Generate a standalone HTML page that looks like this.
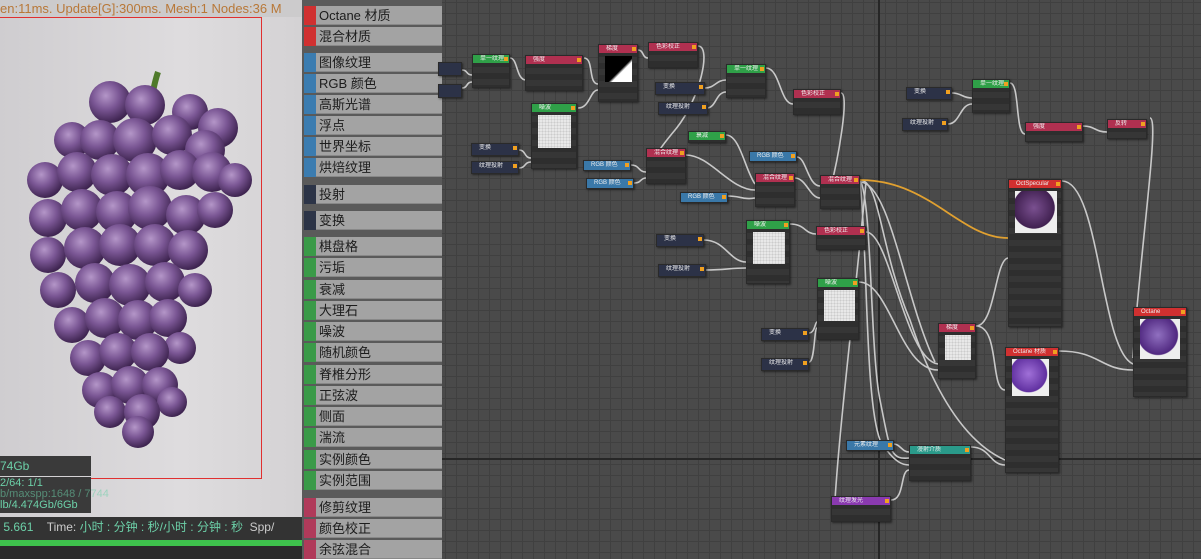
<!DOCTYPE html>
<html><head><meta charset="utf-8"><style>
*{margin:0;padding:0;box-sizing:border-box}
body{width:1201px;height:559px;overflow:hidden;background:#4a4a4a;font-family:"Liberation Sans","Noto Sans CJK SC",sans-serif;position:relative}
#vp{position:absolute;left:0;top:0;width:302px;height:559px;background:linear-gradient(90deg,#cfcdd0,#dedcde 60%,#d4d2d4);overflow:hidden}
#graph{position:absolute;left:442px;top:0;width:759px;height:559px;background-color:#4a4a4a;background-image:linear-gradient(#404040 1px,transparent 1px),linear-gradient(90deg,#404040 1px,transparent 1px);background-size:11px 11px;background-position:3px 2px}
#side{position:absolute;left:302px;top:0;width:141px;height:559px;background:#5a5a5a}
.it{position:absolute;left:2px;width:138px;height:19px;background:#a3a3a3;border-bottom:1px solid #888;font-size:13px;line-height:19px;color:#1c1c1c;padding-left:15px}
.it i{position:absolute;left:0;top:0;width:12px;height:19px}
.n{position:absolute;background:#363636;border:1px solid #2a2a2a;box-shadow:1px 1px 2px rgba(0,0,0,.5);background-image:repeating-linear-gradient(#363636 0 6px,#2e2e2e 6px 12px)}
.h{height:8px;font-size:6px;line-height:8px;color:#eee;padding-left:7px;white-space:nowrap;overflow:hidden;position:relative}
.h:after{content:"";position:absolute;right:1px;top:2px;width:4px;height:4px;background:#f0a020}
.img{position:absolute;left:6px;top:11px;background:#e8e8e8;background-image:radial-gradient(circle,#ccc 1px,transparent 1px);background-size:3px 3px}
.dk{background:#2c3247}.bl{background:#3a78a8}
</style></head><body>
<div id="vp">
<div style="position:absolute;left:0;top:0;width:302px;height:17px;background:#cccbcc;font-size:13px;color:#b87838;line-height:17px;white-space:nowrap">en:11ms. Update[G]:300ms. Mesh:1 Nodes:36 M</div>
<div style="position:absolute;left:-2px;top:17px;width:264px;height:462px;border:1px solid #e03030"></div>
<svg width="302" height="559" style="position:absolute;left:0;top:0">
<defs><radialGradient id="g" cx="40%" cy="35%" r="65%"><stop offset="0" stop-color="#b496c8"/><stop offset=".5" stop-color="#7a5694"/><stop offset="1" stop-color="#3e2450"/></radialGradient></defs>
<path d="M150 115 Q152 90 158 72" stroke="#4f7a2a" stroke-width="6" fill="none"/>
<g fill="url(#g)">
<circle cx="110" cy="102" r="21"/><circle cx="190" cy="112" r="18"/><circle cx="218" cy="128" r="20"/><circle cx="145" cy="105" r="20"/>
<circle cx="72" cy="140" r="18"/><circle cx="100" cy="140" r="20"/><circle cx="135" cy="140" r="22"/><circle cx="172" cy="135" r="20"/><circle cx="205" cy="150" r="20"/>
<circle cx="45" cy="180" r="18"/><circle cx="77" cy="172" r="20"/><circle cx="112" cy="175" r="21"/><circle cx="148" cy="175" r="22"/><circle cx="180" cy="170" r="20"/><circle cx="212" cy="172" r="20"/><circle cx="235" cy="180" r="17"/>
<circle cx="48" cy="218" r="19"/><circle cx="82" cy="210" r="21"/><circle cx="117" cy="212" r="21"/><circle cx="150" cy="208" r="22"/><circle cx="186" cy="215" r="20"/><circle cx="215" cy="210" r="18"/>
<circle cx="48" cy="255" r="18"/><circle cx="85" cy="248" r="21"/><circle cx="120" cy="245" r="21"/><circle cx="155" cy="245" r="21"/><circle cx="188" cy="250" r="20"/>
<circle cx="58" cy="290" r="18"/><circle cx="95" cy="283" r="20"/><circle cx="130" cy="285" r="21"/><circle cx="165" cy="282" r="20"/><circle cx="195" cy="290" r="17"/>
<circle cx="72" cy="325" r="18"/><circle cx="105" cy="318" r="20"/><circle cx="138" cy="320" r="20"/><circle cx="168" cy="318" r="19"/><circle cx="180" cy="348" r="16"/>
<circle cx="88" cy="358" r="18"/><circle cx="118" cy="352" r="19"/><circle cx="150" cy="352" r="19"/>
<circle cx="100" cy="390" r="18"/><circle cx="130" cy="385" r="19"/><circle cx="160" cy="385" r="18"/><circle cx="172" cy="402" r="15"/>
<circle cx="110" cy="412" r="16"/><circle cx="142" cy="412" r="18"/><circle cx="138" cy="432" r="16"/>
</g></svg>
<div style="position:absolute;left:0;top:456px;width:91px;height:20px;background:#3a3a3a;color:#6cd0a8;font-size:12px;line-height:20px">74Gb</div>
<div style="position:absolute;left:0;top:477px;width:91px;height:36px;background:#3a3a3a"></div>
<div style="position:absolute;left:0;top:478px;color:#6cd0a8;font-size:11px;line-height:11px;white-space:nowrap">2/64: 1/1<br><span style="opacity:.55">b/maxspp:1648 / 7744</span><br>lb/4.474Gb/6Gb</div>
<div style="position:absolute;left:0;top:517px;width:302px;height:21px;background:#333;color:#6cd0a8;font-size:12px;line-height:21px;white-space:nowrap;overflow:hidden">&nbsp;5.661 &nbsp;&nbsp;&nbsp;<span style="color:#ccc">Time:</span> 小时 : 分钟 : 秒/小时 : 分钟 : 秒 &nbsp;<span style="color:#ccc">Spp/</span></div>
<div style="position:absolute;left:0;top:538px;width:302px;height:3px;background:#333"></div>
<div style="position:absolute;left:0;top:540px;width:302px;height:6px;background:#3ec24c"></div>
<div style="position:absolute;left:0;top:546px;width:302px;height:13px;background:#2b2b2b"></div>
</div>
<div id="side">
<div class="it" style="top:6px"><i style="background:#d03030"></i>Octane 材质</div>
<div class="it" style="top:27px"><i style="background:#d03030"></i>混合材质</div>
<div class="it" style="top:53px"><i style="background:#3b7cb0"></i>图像纹理</div>
<div class="it" style="top:74px"><i style="background:#3b7cb0"></i>RGB 颜色</div>
<div class="it" style="top:95px"><i style="background:#3b7cb0"></i>高斯光谱</div>
<div class="it" style="top:116px"><i style="background:#3b7cb0"></i>浮点</div>
<div class="it" style="top:137px"><i style="background:#3b7cb0"></i>世界坐标</div>
<div class="it" style="top:158px"><i style="background:#3b7cb0"></i>烘焙纹理</div>
<div class="it" style="top:185px"><i style="background:#2c3447"></i>投射</div>
<div class="it" style="top:211px"><i style="background:#2c3447"></i>变换</div>
<div class="it" style="top:237px"><i style="background:#3a9a48"></i>棋盘格</div>
<div class="it" style="top:258px"><i style="background:#3a9a48"></i>污垢</div>
<div class="it" style="top:280px"><i style="background:#3a9a48"></i>衰减</div>
<div class="it" style="top:301px"><i style="background:#3a9a48"></i>大理石</div>
<div class="it" style="top:322px"><i style="background:#3a9a48"></i>噪波</div>
<div class="it" style="top:343px"><i style="background:#3a9a48"></i>随机颜色</div>
<div class="it" style="top:365px"><i style="background:#3a9a48"></i>脊椎分形</div>
<div class="it" style="top:386px"><i style="background:#3a9a48"></i>正弦波</div>
<div class="it" style="top:407px"><i style="background:#3a9a48"></i>侧面</div>
<div class="it" style="top:428px"><i style="background:#3a9a48"></i>湍流</div>
<div class="it" style="top:450px"><i style="background:#3a9a48"></i>实例颜色</div>
<div class="it" style="top:471px"><i style="background:#3a9a48"></i>实例范围</div>
<div class="it" style="top:498px"><i style="background:#b03a5a"></i>修剪纹理</div>
<div class="it" style="top:519px"><i style="background:#b03a5a"></i>颜色校正</div>
<div class="it" style="top:540px"><i style="background:#b03a5a"></i>余弦混合</div>
</div>
<div id="graph">
<div style="position:absolute;left:436px;top:0;width:2px;height:559px;background:#262626"></div>
<div style="position:absolute;left:0;top:458px;width:759px;height:2px;background:#262626"></div>
</div>
<svg width="1201" height="559" style="position:absolute;left:0;top:0" fill="none" stroke="#c8c8c8" stroke-width="1.6">
<path d="M462 70 C468 70 466 75 472 75"/><path d="M462 88 C468 88 466 82 472 82"/>
<path d="M510 58 C518 58 516 80 526 80"/>
<path d="M578 108 C590 108 590 90 598 90"/>
<path d="M584 58 C594 58 588 84 598 84"/>
<path d="M638 50 C644 50 642 58 648 58"/>
<path d="M698 46 C712 46 700 100 675 130 C650 160 655 160 648 170"/>
<path d="M519 150 C526 150 524 158 531 158"/><path d="M519 168 C526 168 524 162 531 162"/>
<path d="M631 165 C640 165 638 172 646 172"/><path d="M634 183 C642 183 640 178 646 178"/>
<path d="M705 88 C715 88 716 80 726 80"/><path d="M707 108 C716 108 716 92 726 92"/>
<path d="M766 68 C780 68 780 104 793 104"/>
<path d="M841 93 C850 93 838 160 830 190"/>
<path d="M686 155 C710 155 730 190 755 190"/>
<path d="M726 135 C740 135 745 170 755 184"/><path d="M797 157 C806 157 808 186 820 186"/>
<path d="M728 196 C740 196 744 200 755 198"/><path d="M795 178 C806 178 810 198 820 198"/>
<path d="M704 240 C725 240 730 262 746 262"/><path d="M706 270 C725 270 730 268 746 268"/>
<path d="M790 224 C805 224 805 234 816 234"/>
<path d="M809 333 C815 333 815 322 817 322"/><path d="M809 362 C815 362 814 328 817 328"/>
<path d="M866 232 C890 232 905 360 938 364"/><path d="M859 282 C890 282 900 370 938 370"/>
<path d="M860 182 C890 182 905 300 935 362"/>
<path d="M860 180 C880 180 880 250 910 320 C930 380 960 440 1005 460"/>
<path d="M860 180 C872 200 870 350 880 400 C890 450 890 460 909 458"/>
<path d="M860 180 C868 260 865 400 880 440 C895 465 905 465 909 465"/>
<path d="M866 182 C855 300 840 420 835 500"/>
<path d="M976 326 C995 326 995 260 1008 258"/>
<path d="M976 326 C1000 326 990 390 1005 390"/>
<path d="M971 447 C990 447 990 465 1005 465"/>
<path d="M894 444 C900 444 902 452 909 452"/>
<path d="M891 500 C905 500 900 470 909 470"/>
<path d="M1062 181 C1100 181 1100 350 1133 364"/>
<path d="M1059 351 C1100 351 1100 370 1133 370"/>
<path d="M1150 118 C1160 118 1140 250 1133 358"/>
<path d="M952 93 C962 93 962 98 972 98"/><path d="M948 124 C960 124 960 104 972 104"/>
<path d="M1010 83 C1020 83 1015 134 1025 134"/>
<path d="M1083 126 C1095 126 1095 132 1107 132"/>
<path d="M860 180 C930 180 960 238 1008 238" stroke="#e0a030" stroke-width="1.8"/>
</svg>
<div class="n dk" style="left:438px;top:62px;width:24px;height:14px"></div>
<div class="n dk" style="left:438px;top:84px;width:24px;height:14px"></div>
<div class="n" style="left:472px;top:54px;width:38px;height:34px"><div class="h" style="background:#2fa048">单一纹理</div></div>
<div class="n" style="left:525px;top:55px;width:58px;height:36px"><div class="h" style="background:#b03050">强度</div></div>
<div class="n" style="left:598px;top:44px;width:40px;height:58px"><div class="h" style="background:#b03050">梯度</div><div class="img" style="width:27px;height:26px;background:linear-gradient(135deg,#000 55%,#fff 62%)"></div></div>
<div class="n" style="left:648px;top:42px;width:50px;height:26px"><div class="h" style="background:#b03050">色彩校正</div></div>
<div class="n" style="left:531px;top:103px;width:46px;height:66px"><div class="h" style="background:#2fa048">噪波</div><div class="img" style="width:33px;height:33px"></div></div>
<div class="n dk" style="left:471px;top:143px;width:48px;height:13px"><div class="h" style="background:transparent">变换</div></div>
<div class="n dk" style="left:471px;top:161px;width:48px;height:13px"><div class="h" style="background:transparent">纹理投射</div></div>
<div class="n bl" style="left:583px;top:160px;width:48px;height:11px"><div class="h" style="background:transparent">RGB 颜色</div></div>
<div class="n bl" style="left:586px;top:178px;width:48px;height:11px"><div class="h" style="background:transparent">RGB 颜色</div></div>
<div class="n" style="left:646px;top:148px;width:40px;height:36px"><div class="h" style="background:#b03050">混合纹理</div></div>
<div class="n dk" style="left:655px;top:82px;width:50px;height:13px"><div class="h" style="background:transparent">变换</div></div>
<div class="n dk" style="left:658px;top:102px;width:50px;height:13px"><div class="h" style="background:transparent">纹理投射</div></div>
<div class="n" style="left:726px;top:64px;width:40px;height:34px"><div class="h" style="background:#2fa048">单一纹理</div></div>
<div class="n" style="left:793px;top:89px;width:48px;height:26px"><div class="h" style="background:#b03050">色彩校正</div></div>
<div class="n" style="left:688px;top:131px;width:38px;height:12px"><div class="h" style="background:#2fa048">衰减</div></div>
<div class="n bl" style="left:749px;top:151px;width:48px;height:11px"><div class="h" style="background:transparent">RGB 颜色</div></div>
<div class="n" style="left:755px;top:173px;width:40px;height:34px"><div class="h" style="background:#b03050">混合纹理</div></div>
<div class="n bl" style="left:680px;top:192px;width:48px;height:11px"><div class="h" style="background:transparent">RGB 颜色</div></div>
<div class="n" style="left:820px;top:175px;width:40px;height:34px"><div class="h" style="background:#b03050">混合纹理</div></div>
<div class="n dk" style="left:656px;top:234px;width:48px;height:13px"><div class="h" style="background:transparent">变换</div></div>
<div class="n dk" style="left:658px;top:264px;width:48px;height:13px"><div class="h" style="background:transparent">纹理投射</div></div>
<div class="n" style="left:746px;top:220px;width:44px;height:64px"><div class="h" style="background:#2fa048">噪波</div><div class="img" style="width:32px;height:32px"></div></div>
<div class="n" style="left:816px;top:226px;width:50px;height:24px"><div class="h" style="background:#b03050">色彩校正</div></div>
<div class="n" style="left:817px;top:278px;width:42px;height:62px"><div class="h" style="background:#2fa048">噪波</div><div class="img" style="width:31px;height:31px"></div></div>
<div class="n dk" style="left:761px;top:328px;width:48px;height:13px"><div class="h" style="background:transparent">变换</div></div>
<div class="n dk" style="left:761px;top:358px;width:48px;height:13px"><div class="h" style="background:transparent">纹理投射</div></div>
<div class="n" style="left:938px;top:323px;width:38px;height:56px"><div class="h" style="background:#b03050">梯度</div><div class="img" style="width:26px;height:25px"></div></div>
<div class="n dk" style="left:906px;top:87px;width:46px;height:13px"><div class="h" style="background:transparent">变换</div></div>
<div class="n dk" style="left:902px;top:118px;width:46px;height:13px"><div class="h" style="background:transparent">纹理投射</div></div>
<div class="n" style="left:972px;top:79px;width:38px;height:34px"><div class="h" style="background:#2fa048">单一纹理</div></div>
<div class="n" style="left:1025px;top:122px;width:58px;height:20px"><div class="h" style="background:#b03050">强度</div></div>
<div class="n" style="left:1107px;top:119px;width:40px;height:20px"><div class="h" style="background:#b03050">反转</div></div>
<div class="n" style="left:1008px;top:179px;width:54px;height:148px"><div class="h" style="background:#d03030">OctSpecular</div><div class="img" style="width:42px;height:42px;background:radial-gradient(circle at 45% 40%,#7a5090,#402050 60%,#eee 62%)"></div></div>
<div class="n" style="left:1005px;top:347px;width:54px;height:126px"><div class="h" style="background:#d03030">Octane 材质</div><div class="img" style="width:37px;height:37px;background:radial-gradient(circle at 45% 40%,#a070d8,#6030a0 60%,#eee 63%)"></div></div>
<div class="n" style="left:1133px;top:307px;width:54px;height:90px"><div class="h" style="background:#d03030">Octane</div><div class="img" style="width:40px;height:40px;background:radial-gradient(circle at 45% 40%,#9070c0,#502880 60%,#eee 63%)"></div></div>
<div class="n bl" style="left:846px;top:440px;width:48px;height:11px"><div class="h" style="background:transparent">元素纹理</div></div>
<div class="n" style="left:909px;top:445px;width:62px;height:36px"><div class="h" style="background:#2a9a8a">漫射介质</div></div>
<div class="n" style="left:831px;top:496px;width:60px;height:26px"><div class="h" style="background:#8a3ab0">纹理发光</div></div>
</body></html>
